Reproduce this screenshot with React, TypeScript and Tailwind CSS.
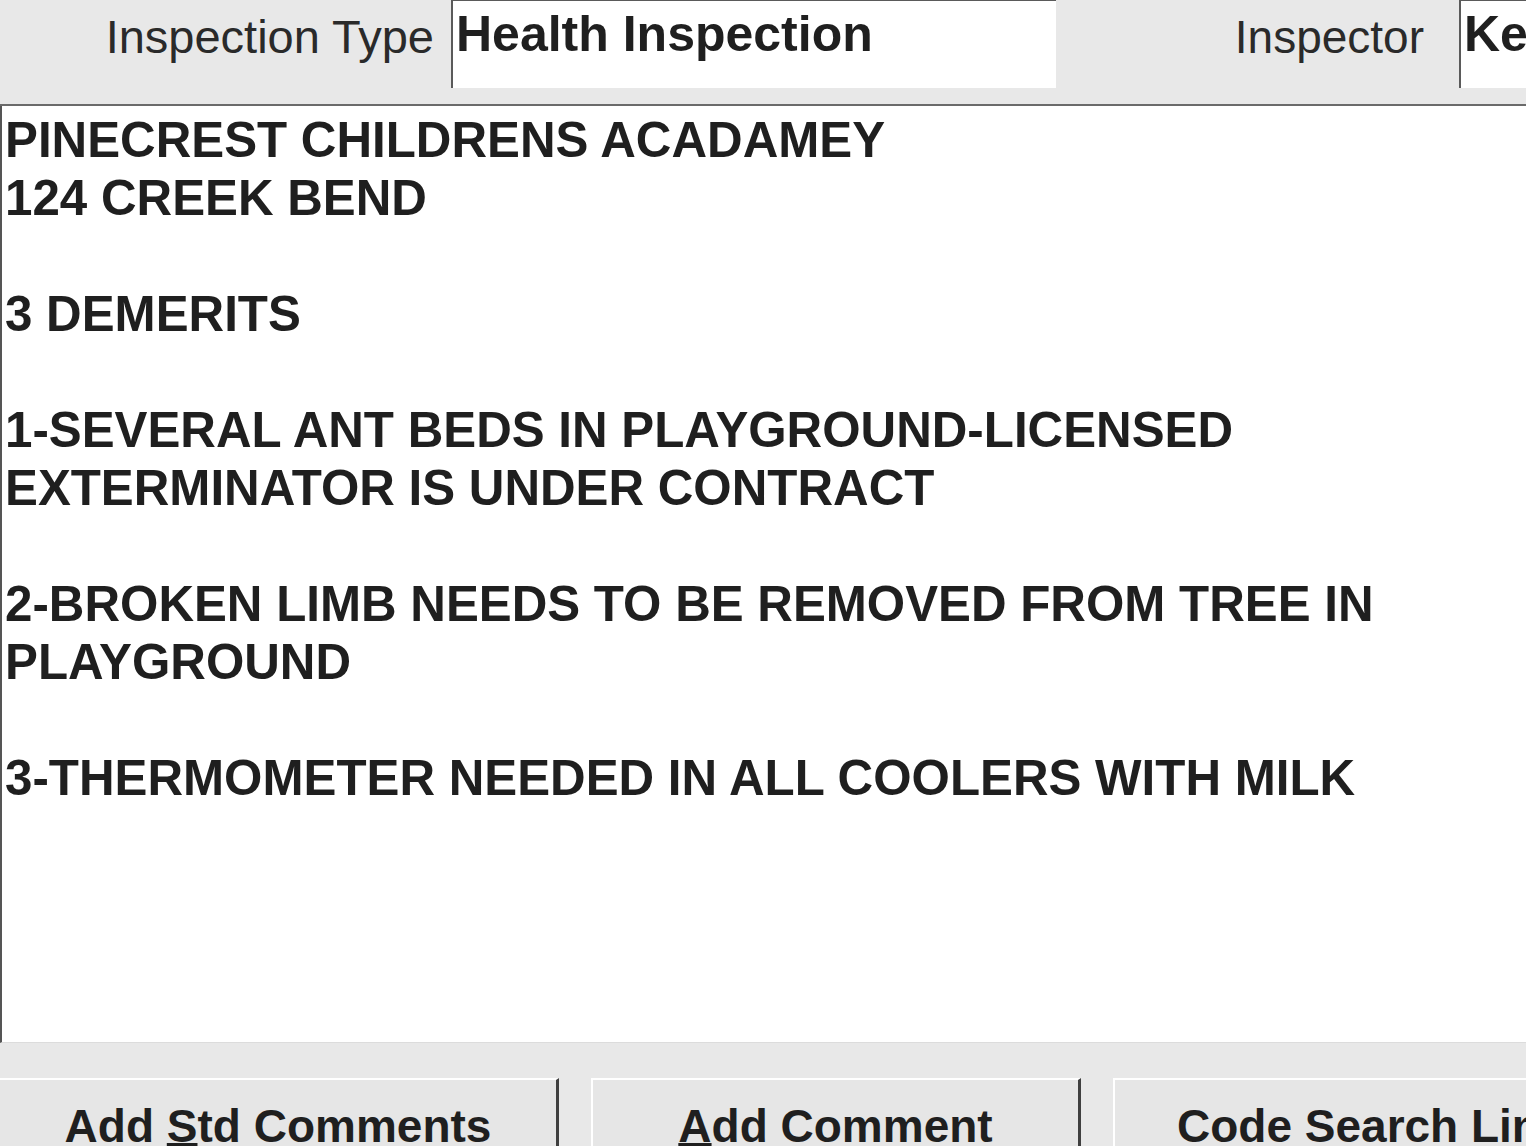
import React from "react";

const font = { fontFamily: '"Liberation Sans", Arial, sans-serif' };

export default function App() {
  const lines = [
    "PINECREST CHILDRENS ACADAMEY",
    "124 CREEK BEND",
    "",
    "3 DEMERITS",
    "",
    "1-SEVERAL ANT BEDS IN PLAYGROUND-LICENSED",
    "EXTERMINATOR IS UNDER CONTRACT",
    "",
    "2-BROKEN LIMB NEEDS TO BE REMOVED FROM TREE IN",
    "PLAYGROUND",
    "",
    "3-THERMOMETER NEEDED IN ALL COOLERS WITH MILK",
  ];
  return (
    <div
      className="w-[1526px] h-[1146px] overflow-hidden bg-[#e8e8e8] text-[#1f1f1f] flex flex-col"
      style={font}
    >
      {/* top bar */}
      <div className="h-[106px] shrink-0 flex items-start border-b-2 border-[#6a6a6a]">
        <div className="w-[451px] shrink-0 text-right pr-[17px] pt-[9px] text-[47px] leading-[56px] text-[#2a2a2a] whitespace-nowrap">
          Inspection Type
        </div>
        <div className="w-[605px] h-[88px] shrink-0 bg-white border-l-2 border-t border-[#5a5a5a] pl-[3px] pt-[2px] text-[50px] leading-[62px] font-bold whitespace-nowrap overflow-hidden">
          Health Inspection
        </div>
        <div className="w-[403px] shrink-0 text-right pr-[35px] pt-[9px] text-[46px] leading-[56px] text-[#2a2a2a] whitespace-nowrap">
          Inspector
        </div>
        <div className="flex-1 h-[88px] bg-white border-l-2 border-t border-[#5a5a5a] pl-[3px] pt-[2px] text-[50px] leading-[62px] font-bold whitespace-nowrap overflow-hidden">
          Ken
        </div>
      </div>

      {/* text area */}
      <div className="h-[937px] shrink-0 bg-white border-l-2 border-[#555] border-b border-b-[#dcdcdc] pl-[3px] pt-[5px] overflow-hidden">
        {lines.map((l, i) => (
          <div
            key={i}
            className="text-[49.3px] leading-[58px] h-[58px] font-bold whitespace-nowrap"
          >
            {l}
          </div>
        ))}
      </div>

      {/* gap */}
      <div className="h-[35px] shrink-0" />

      {/* buttons */}
      <div className="flex-1 flex items-start gap-[32px] whitespace-nowrap">
        <div className="w-[559px] h-[80px] shrink-0 bg-[#e6e6e6] border-t-2 border-t-white border-r-[3px] border-r-[#3f3f3f] flex justify-center pt-[20px] text-[46px] leading-[53px] font-bold">
          <span>
            Add <span className="underline decoration-[3px] underline-offset-[1px]">S</span>td Comments
          </span>
        </div>
        <div className="w-[490px] h-[80px] shrink-0 bg-[#e6e6e6] border-t-2 border-t-white border-l-2 border-l-white border-r-[3px] border-r-[#3f3f3f] flex justify-center pt-[20px] text-[46px] leading-[53px] font-bold">
          <span>
            <span className="underline decoration-[3px] underline-offset-[1px]">A</span>dd Comment
          </span>
        </div>
        <div className="flex-1 h-[80px] bg-[#e6e6e6] border-t-2 border-t-white border-l-2 border-l-white flex justify-start pl-[62px] pt-[20px] text-[46px] leading-[53px] font-bold overflow-hidden">
          <span>Code Search Link</span>
        </div>
      </div>
    </div>
  );
}
